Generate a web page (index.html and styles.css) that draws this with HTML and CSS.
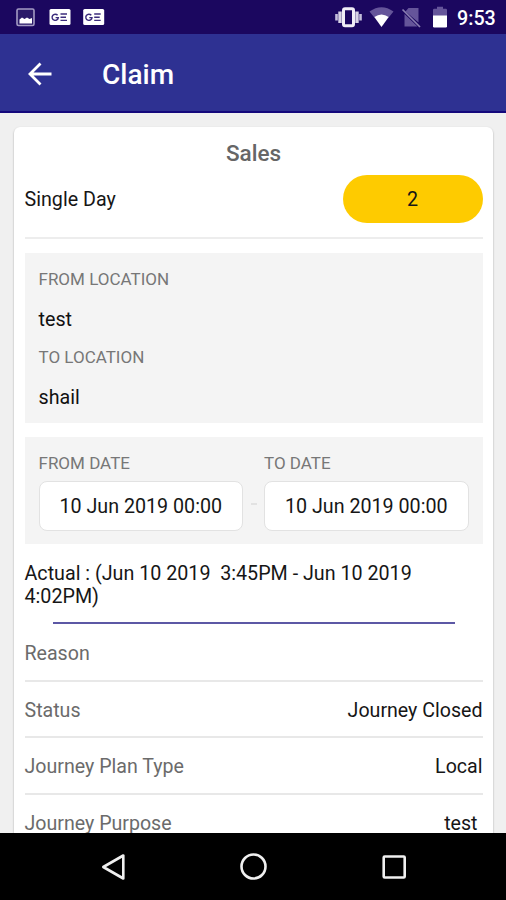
FILE: index.html
```
<!DOCTYPE html>
<html lang="en">
<head>
<meta charset="utf-8">
<title>Claim</title>
<link rel="stylesheet" href="styles.css">
</head>
<body>
<div class="screen">
  <div class="status-bar">
    <svg class="status-icons" width="110" height="34" viewBox="0 0 110 34">
      <rect x="17" y="9" width="17" height="16.500" rx="1.5" fill="#2b1a69" stroke="#a49bc4" stroke-width="1.600"/>
      <path d="M19.500 23.500v-4l2.500-2 2.500 1.500 2.500-1.500 2.500 1.500 2.500-1v5.500z" fill="#fff"/>
      <g id="news">
        <rect x="49.500" y="9" width="21" height="16" rx="1.500" fill="#fff"/>
        <path d="M57.600 15.300a3.100 3.100 0 1 0 .7 2.300h-2.700M60.500 14h6.500M60.500 17.200h5.500M60.500 20.400h6.500" fill="none" stroke="#3c2c7c" stroke-width="1.400"/>
      </g>
      <use href="#news" x="33.700"/>
    </svg>
    <svg class="status-icons" width="116" height="34" viewBox="334 0 116 34">
      <rect x="343.500" y="8.800" width="10" height="17" rx="1.500" fill="none" stroke="#f0eef6" stroke-width="3"/>
      <path d="M340 11.500v11.500M357 11.500v11.500" stroke="#d8d4e6" stroke-width="3.400"/>
      <path d="M336.500 14v6.500M360.500 14v6.500" stroke="#c4bedb" stroke-width="2.600"/>
      <path d="M369.500 11.500q12-8.500 24 0l-4.800 6q-7.200-5-14.400 0z" fill="#65559a"/>
      <path d="M374.300 17q7.200-5 14.400 0l-7.200 10z" fill="#fff"/>
      <path d="M405.500 11.500l3-3.500h10v14.500zM404.500 14l13 12.500h-13z" fill="#65559a"/>
      <path d="M402.500 9.500l17.500 17.500" stroke="#8a7fb2" stroke-width="1.700"/>
      <path d="M433 10q0-1.200 1.200-1.200h2.800v-2h6v2h2.800q1.200 0 1.200 1.200v6.500h-14z" fill="#65559a"/>
      <path d="M433 15.500h14v10.700q0 1.200-1.200 1.200h-11.600q-1.200 0-1.200-1.200z" fill="#fff"/>
    </svg>
    <span class="clock">9:53</span>
  </div>
  <header class="app-bar">
    <svg class="back" width="24" height="24" viewBox="0 0 24 24"><path d="M23.500 12H2.500M12.500 1.500L2 12l10.500 10.500" fill="none" stroke="#fff" stroke-width="2.800"/></svg>
    <h1 class="title">Claim</h1>
  </header>
  <main class="content">
    <section class="card">
      <h2 class="card-title">Sales</h2>
      <div class="day-row"><span>Single Day</span><span class="pill">2</span></div>
      <div class="panel locations">
        <div class="label">FROM LOCATION</div>
        <div class="place">test</div>
        <div class="label">TO LOCATION</div>
        <div class="place">shail</div>
      </div>
      <div class="panel dates">
        <div class="date"><div class="label">FROM DATE</div><div class="field">10 Jun 2019 00:00</div></div>
        <span class="dash"></span>
        <div class="date"><div class="label">TO DATE</div><div class="field">10 Jun 2019 00:00</div></div>
      </div>
      <p class="actual">Actual : (Jun 10 2019&nbsp; 3:45PM - Jun 10 2019 4:02PM)</p>
      <div class="accent-line"></div>
      <div class="row first"><span class="key">Reason</span></div>
      <div class="row"><span class="key">Status</span><span>Journey Closed</span></div>
      <div class="row"><span class="key">Journey Plan Type</span><span>Local</span></div>
      <div class="row"><span class="key">Journey Purpose</span><span class="inset">test</span></div>
    </section>
  </main>
  <nav class="nav-bar">
    <svg width="506" height="67" viewBox="0 0 506 67" fill="none" stroke="#f0f0f0" stroke-width="2.600" stroke-linejoin="round">
      <path d="M123.300 22.500v23L103.300 34z"/>
      <circle cx="253.500" cy="33.500" r="12"/>
      <rect x="383.700" y="23.500" width="21" height="21" rx="1"/>
    </svg>
  </nav>
</div>
</body>
</html>
```
FILE: styles.css
```
* { box-sizing: border-box; }
body { margin: 0; font-family: Roboto, "Liberation Sans", sans-serif; font-size: 19.7px; line-height: 23px; color: #161616; }
.screen { width: 506px; height: 900px; display: flex; flex-direction: column; overflow: hidden; background: #f0f0f0; }
.status-bar { height: 34px; flex: none; display: flex; align-items: center; background: #1b075f; color: #fff; }
.status-icons { flex: none; }
.status-icons + .status-icons { margin-left: auto; }
.clock { width: 56px; padding: 3px 0 0 7px; font-size: 19.7px; font-weight: 500; }
.app-bar { height: 79px; flex: none; display: flex; align-items: center; padding-left: 28px; background: #2e3192; border-bottom: 2px solid #14087c; color: #fff; }
.title { margin: 5px 0 0 50px; font-size: 28px; line-height: 34px; font-weight: 500; }
.back { margin-top: 3px; }
.content { flex: 1; min-height: 0; overflow: hidden; padding: 14px 13px 0 14px; }
.card { height: 760px; padding: 14px 10.500px 0; background: #fff; border-radius: 6px; box-shadow: 0 1px 2px rgba(0,0,0,.35); }
.card-title { margin: 0; text-align: center; font-size: 22.5px; line-height: 25px; font-weight: 500; color: #666; }
.day-row { height: 73px; padding: 9px 0 15px; display: flex; justify-content: space-between; align-items: center; border-bottom: 2px solid #ededed; }
.day-row > :first-child { padding-top: 2px; }
.pill { width: 140px; height: 48px; padding-top: 1px; border-radius: 24px; display: flex; align-items: center; justify-content: center; background: #fecb00; }
.panel { margin-top: 14px; background: #f4f4f4; }
.locations { height: 170px; padding: 15px 14px 0; }
.label { font-size: 17px; line-height: 23px; color: #777; }
.place { height: 55px; padding-top: 17px; color: #111; }
.dates { height: 107px; padding: 15px 14px 0; display: flex; justify-content: space-between; }
.date { width: 204.500px; }
.field { height: 50px; margin-top: 6px; padding-top: 1px; display: flex; align-items: center; justify-content: center; background: #fff; border: 1.500px solid #e2e2e2; border-radius: 8px; }
.dash { width: 6px; height: 2px; margin-top: 51px; background: #e2e2e2; }
.actual { margin: 18px 0 0; }
.accent-line { height: 2px; margin: 14px 28px 0; background: #5c58a5; }
.row { height: 56.300px; padding-top: 3px; display: flex; justify-content: space-between; align-items: center; border-bottom: 2px solid #e8e8e8; font-size: 19.6px; }
.first { height: 58px; padding-top: 2px; }
.key { color: #6b6b6b; }
.inset { padding-right: 5px; }
.nav-bar { height: 67px; flex: none; background: #000; }
.nav-bar svg { display: block; }
```
